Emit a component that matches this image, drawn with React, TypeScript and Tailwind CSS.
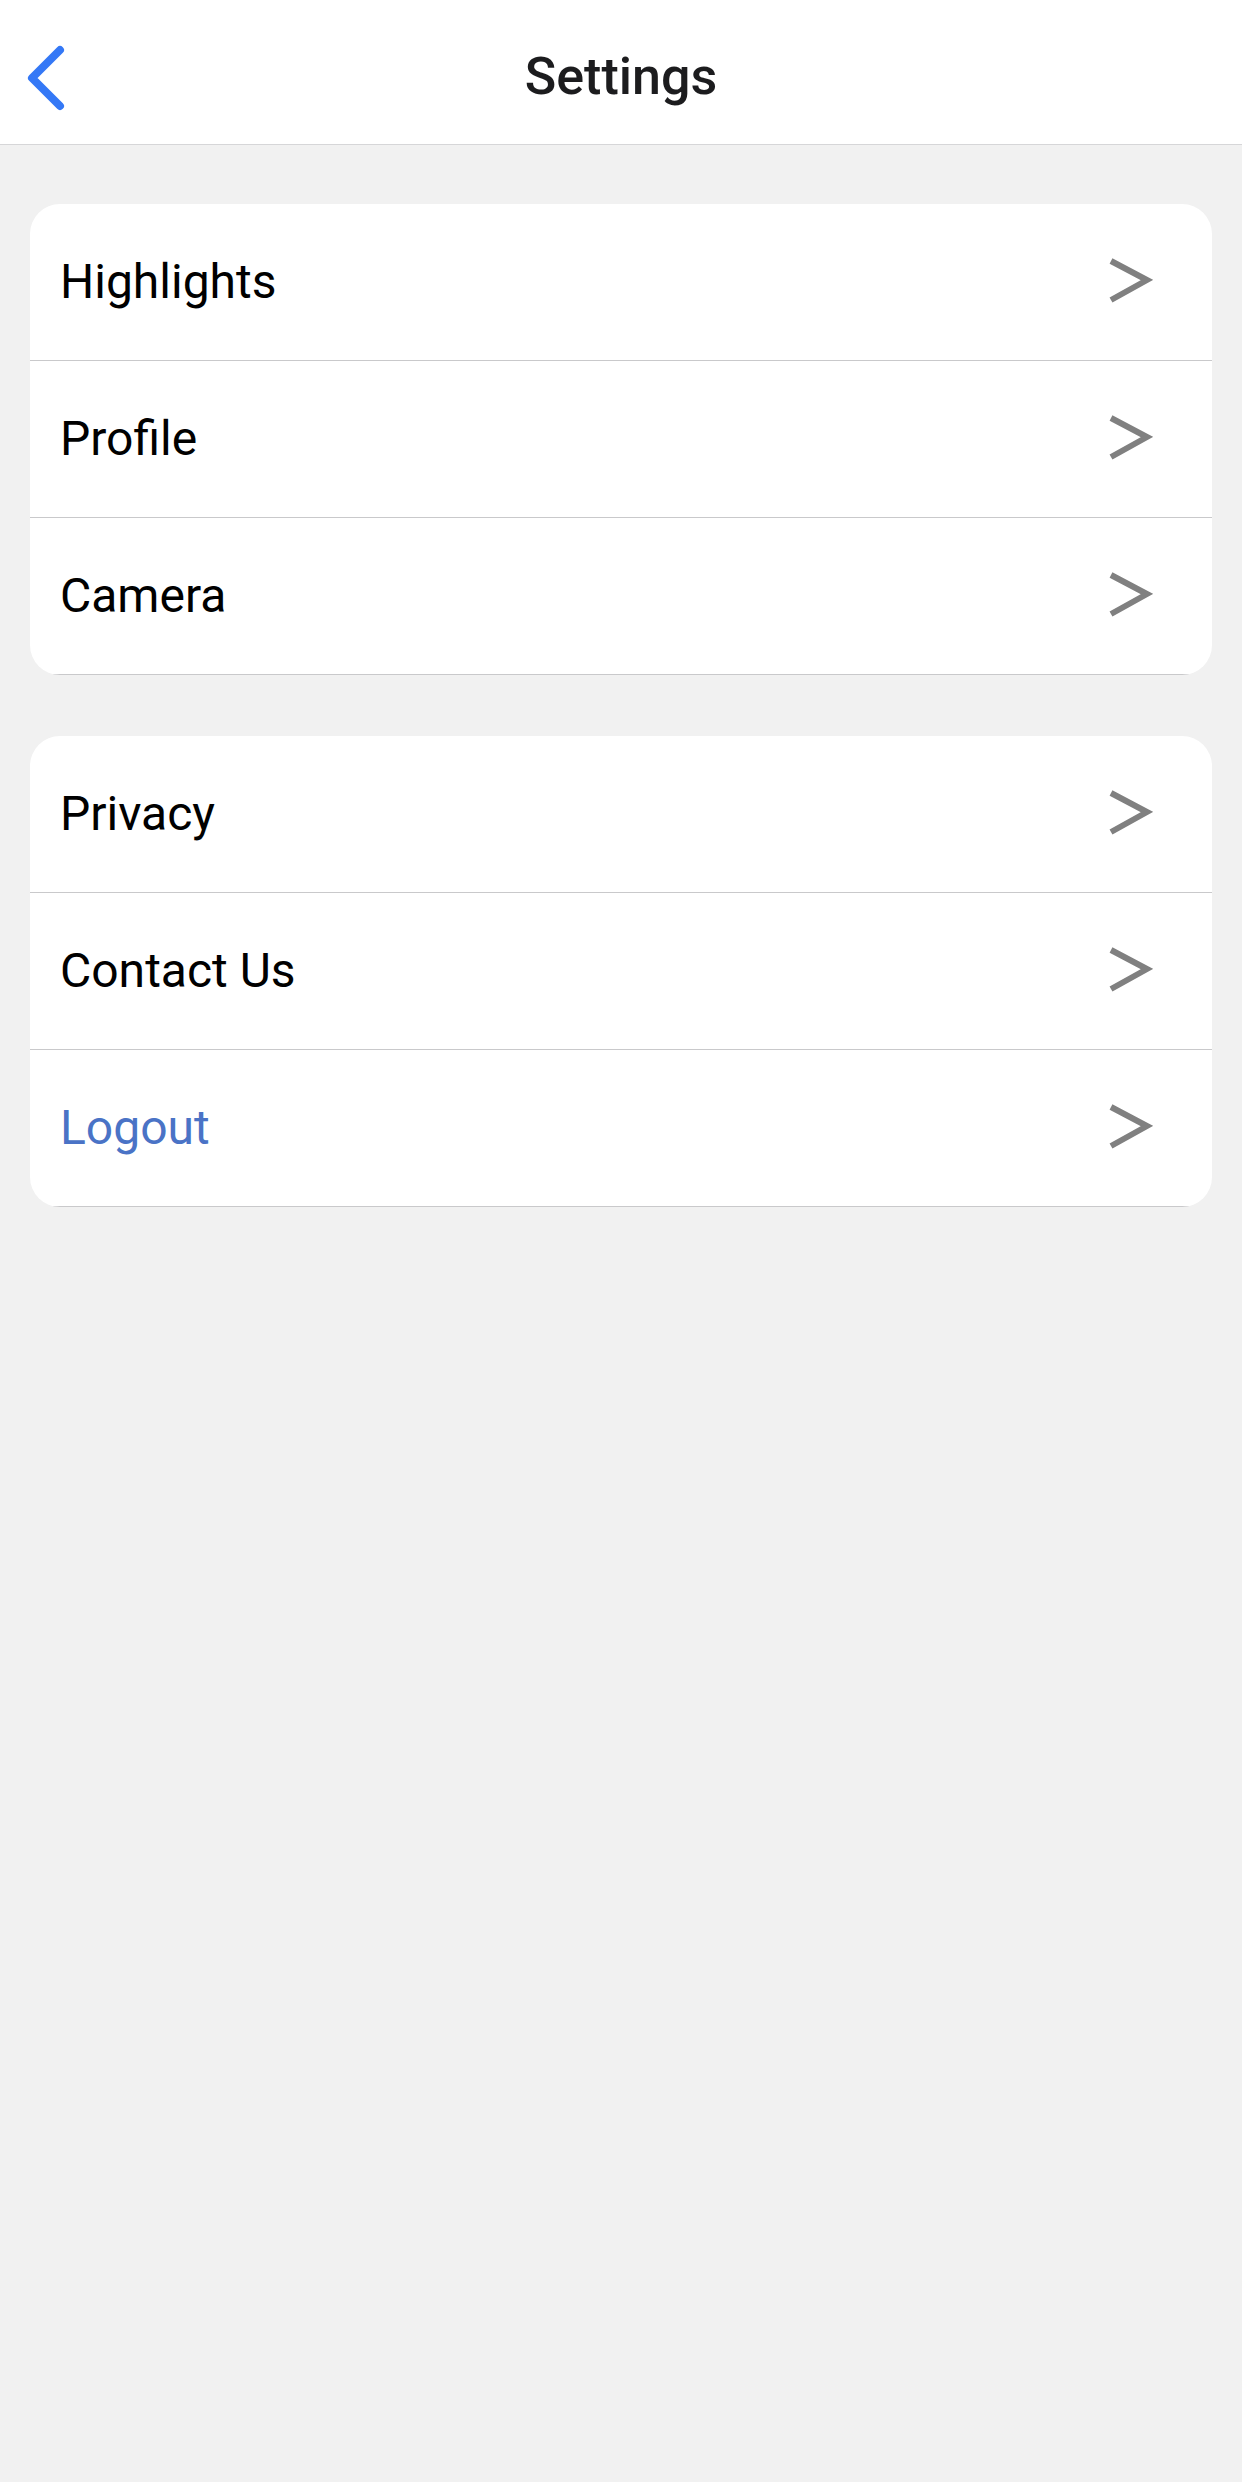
import React from "react";

const Chevron = () => (
  <svg width="46" height="50" viewBox="0 0 46 50" className="shrink-0">
    <polyline points="4,4 40,23 4,43" fill="none" stroke="#808080" strokeWidth="6" strokeLinejoin="miter" />
  </svg>
);

const Row = ({ label, blue }: { label: string; blue?: boolean }) => (
  <div className="h-[157px] flex items-center justify-between border-b border-[#c9c9cb] pl-[30px] pr-[59px]">
    <span className={`text-[48px] leading-none ${blue ? "text-[#4a73c6]" : "text-black"}`}>{label}</span>
    <Chevron />
  </div>
);

const Card = ({ items }: { items: { label: string; blue?: boolean }[] }) => (
  <div className="mx-[30px] bg-white rounded-[30px] overflow-hidden">
    {items.map((it) => (
      <Row key={it.label} label={it.label} blue={it.blue} />
    ))}
  </div>
);

export default function App() {
  return (
    <div className="min-h-[2482px] bg-[#f1f1f1]" style={{ fontFamily: "Roboto, 'Noto Sans', sans-serif" }}>
      <header className="relative h-[145px] bg-white border-b border-[#d6d6d8] flex items-center justify-center">
        <button className="absolute left-[20px] top-[44px] w-[50px] h-[68px] flex items-center justify-center">
          <svg width="50" height="68" viewBox="0 0 50 68">
            <polyline points="40,6 12,34 40,62" fill="none" stroke="#3478f6" strokeWidth="8" strokeLinecap="round" strokeLinejoin="round" />
          </svg>
        </button>
        <h1 className="text-[52px] font-medium text-[#1c1c1e] leading-none pt-[10px]">Settings</h1>
      </header>
      <div className="pt-[59px] flex flex-col gap-[61px]">
        <Card items={[{ label: "Highlights" }, { label: "Profile" }, { label: "Camera" }]} />
        <Card items={[{ label: "Privacy" }, { label: "Contact Us" }, { label: "Logout", blue: true }]} />
      </div>
    </div>
  );
}
